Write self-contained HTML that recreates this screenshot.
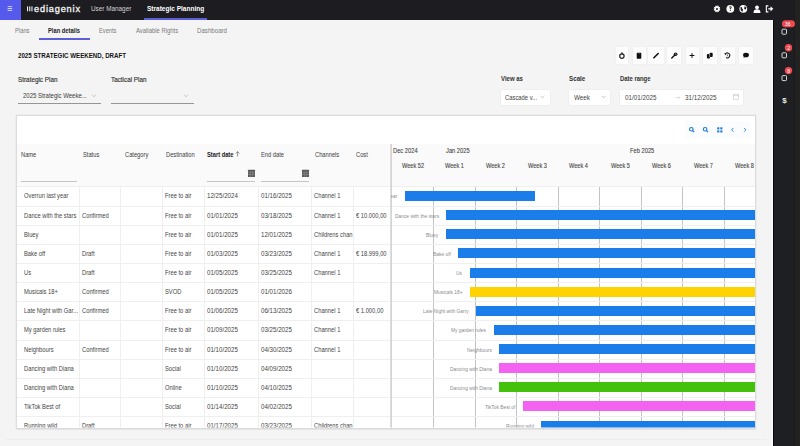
<!DOCTYPE html>
<html><head><meta charset="utf-8">
<style>
*{box-sizing:border-box;margin:0;padding:0}
html,body{width:800px;height:446px;overflow:hidden;background:#f4f4f4;font-family:"Liberation Sans",sans-serif;position:relative}
.a{position:absolute}
.t{position:absolute;white-space:nowrap;line-height:10px;height:10px;transform-origin:0 50%}
#top{position:absolute;left:0;top:0;width:800px;height:20px;background:#1c1c21}
#ham{position:absolute;left:0;top:0;width:21px;height:20px;background:#5559ec}
#side{position:absolute;left:773px;top:20px;width:27px;height:426px;background:#1e1f23;border-left:1.5px solid #08080a}
#card{position:absolute;left:17.3px;top:116.4px;width:737.7px;height:311.2px;background:#fff;box-shadow:0 0 0 1.3px #dcdcdc,0 1px 1px rgba(0,0,0,.3)}
.hdrbg{position:absolute;left:17px;top:143.5px;width:738px;height:43px;background:#fafafa}
.rl{position:absolute;left:17px;width:738px;height:1px;background:#efefef}
.vl{position:absolute;top:186.5px;height:241px;width:1px;background:#efefef}
.wl{position:absolute;top:186.5px;height:241px;width:1px;background:#c4c4c4}
.bar{position:absolute;height:10px}
.btn{position:absolute;top:47px;height:17px;background:#fcfcfc;box-shadow:0 0 1px rgba(0,0,0,.07)}
.sel{position:absolute;top:90px;height:15px;background:#fff;box-shadow:0 0 1.5px rgba(0,0,0,.13);border-radius:1px}
svg{position:absolute;overflow:visible}
</style></head><body>
<div id="top"></div>
<div id="ham"></div>
<svg style="left:0;top:0" width="21" height="20"><g fill="#ccd0fa"><rect x="7.6" y="6.1" width="4.6" height="1"/><rect x="7.6" y="8" width="4.6" height="1"/><rect x="7.6" y="9.9" width="4.6" height="1"/></g></svg>
<svg style="left:0;top:0" width="40" height="20"><g fill="#f4f4f4"><rect x="27" y="6.4" width="1.1" height="4.9"/><rect x="29.2" y="6.4" width="1.1" height="4.9"/><rect x="31.4" y="6.4" width="1.1" height="4.9"/></g></svg>
<div class="t" style="left:34.3px;top:3.6px;font-size:8.2px;font-weight:400;color:#f4f4f4;-webkit-text-stroke:.3px #f4f4f4;letter-spacing:.75px;transform:scaleX(1.12);height:12px;line-height:12px;transform-origin:0 50%">ediagenix</div>
<div class="a" style="left:143.5px;top:18px;width:63.5px;height:1.8px;background:#5d5fd8"></div>
<!-- top right icons -->
<svg style="left:0;top:0" width="800" height="20">
 <g fill="#fff">
  <path d="M719.35 8.98 L720.29 9.54 L719.78 10.77 L718.72 10.51 L718.61 10.62 L718.87 11.68 L717.64 12.19 L717.08 11.25 L716.92 11.25 L716.36 12.19 L715.13 11.68 L715.39 10.62 L715.28 10.51 L714.22 10.77 L713.71 9.54 L714.65 8.98 L714.65 8.82 L713.71 8.26 L714.22 7.03 L715.28 7.29 L715.39 7.18 L715.13 6.12 L716.36 5.61 L716.92 6.55 L717.08 6.55 L717.64 5.61 L718.87 6.12 L718.61 7.18 L718.72 7.29 L719.78 7.03 L720.29 8.26 L719.35 8.82Z M718.00 8.9 A1 1 0 1 0 716.00 8.9 A1 1 0 1 0 718.00 8.9Z" fill-rule="evenodd"/>
  <circle cx="730.3" cy="8.8" r="3.9"/>
  <circle cx="743.3" cy="8.8" r="3.9"/>
  <circle cx="757" cy="7.3" r="1.9"/>
  <path d="M753.6 12.3 q0-3 3.4-3 q3.4 0 3.4 3 v.8 h-6.8z"/>
  <path d="M765.8 5.3 h2.6 v1.1 h-1.5 v4.9 h1.5 v1.1 h-2.6z M768.2 8.2 h2.3 v-2 l2.8 2.6 -2.8 2.6 v-2 h-2.3z"/>
 </g>
 <g fill="#1c1c21">
  <path d="M729.2 7.6 q0-1.3 1.2-1.3 q1.2 0 1.2 1.1 q0 .8-.8 1.1 v.7 h-.9 v-1.2 q.8-.3.8-.7 q0-.4-.4-.4 q-.4 0-.4.6z"/><rect x="729.9" y="10" width=".9" height=".9"/>
  <path d="M740.5 7 q1.2-.3 1.6.6 q-.3 1 .4 1.4 q.8.3.4 1.3 q-.5.8-.2 1.6 q-1.6-.6-2.1-2.2 z M744.8 5.5 q-.2 1 .8 1.3 q.9.2.9 1.2 q-.8.3-.5 1.3 q-.4.4-1 0 q-.6-.8-.9 0 z"/>
 </g>
</svg>
<div id="side"></div>
<div class="a" style="left:793.5px;top:0px;width:1.5px;height:446px;background:#17191f"></div><div class="a" style="left:795px;top:0px;width:5px;height:446px;background:#222221"></div>
<div class="a" style="left:771.8px;top:20px;width:1.2px;height:426px;background:#fbfbfb"></div>
<div class="a" style="left:38.7px;top:38.1px;width:51.2px;height:1.7px;background:#5d5fd4"></div>
<div class="a" style="left:17.5px;top:103.1px;width:83px;height:1.3px;background:#969696"></div>
<div class="a" style="left:110.75px;top:103.1px;width:83px;height:1.3px;background:#969696"></div>

<div class="btn" style="left:616px;width:12px"></div>
<div class="btn" style="left:632.5px;width:13px"></div>
<div class="btn" style="left:648px;width:15.5px"></div>
<div class="btn" style="left:667px;width:13.5px"></div>
<div class="btn" style="left:685.5px;width:13px"></div>
<div class="btn" style="left:703px;width:13.5px"></div>
<div class="btn" style="left:721px;width:13.5px"></div>
<div class="btn" style="left:739px;width:14px"></div>
<svg style="left:0;top:0" width="800" height="70">
 <g fill="#111" stroke="none">
  <circle cx="621.9" cy="56.1" r="2.2" fill="none" stroke="#222" stroke-width="1.2"/>
  <path d="M621.2 52.6 l1.1-.3 .5 1.6 -1 .3z"/>
  <path d="M636.7 53.5 q0-.8.8-.8 h3 q.8 0 .8.8 v4.6 q0 .7-.7.7 h-3.2 q-.7 0-.7-.7z"/>
  <rect x="638.6" y="53.2" width=".9" height=".9" fill="#777"/>
  <path d="M653.9 57.8 L658.2 53.5" stroke="#111" stroke-width="1.6" stroke-linecap="round"/>
  <path d="M671.8 58.1 L674.6 55.3" stroke="#111" stroke-width="1.4" stroke-linecap="round"/>
  <circle cx="675.6" cy="54.2" r="1.8"/>
  <circle cx="675.8" cy="54" r=".55" fill="#fcfcfc"/>
  <path d="M691.55 53.1 h.9 v1.95 h1.95 v.9 h-1.95 v1.95 h-.9 v-1.95 h-1.95 v-.9 h1.95z"/>
  <rect x="706.9" y="54.1" width="3.1" height="4.4" rx="1"/>
  <rect x="709.6" y="52.7" width="3.1" height="4.4" rx="1"/><path d="M709.6 54.1 v3" stroke="#fcfcfc" stroke-width=".5"/>
  <path d="M725.3 54.2 A2.4 2.4 0 1 1 726.1 57.5" fill="none" stroke="#222" stroke-width="1.1"/>
  <path d="M724.3 53.3 l2 .2 -1.1 1.8z"/>
  <path d="M727.3 54.5 v1.2 l.8.5" fill="none" stroke="#222" stroke-width=".7"/>
  <ellipse cx="746" cy="55" rx="2.95" ry="2.3"/>
  <path d="M744 56 l-.4 1.9 2-1.3z"/>
 </g>
</svg>
<div class="sel" style="left:501px;width:48.5px"></div>
<div class="sel" style="left:569px;width:41px"></div>
<div class="sel" style="left:620.3px;width:123px"></div>
<svg style="left:0;top:0" width="800" height="110">
 <g fill="none" stroke="#a8a8a8" stroke-width=".65"><path d="M91.9 94.9 l1.9 1.8 1.9-1.8"/><path d="M184.1 94.9 l1.9 1.8 1.9-1.8"/>
 <path d="M540.6 96 l1.9 1.8 1.9-1.8"/><path d="M601.9 96 l1.9 1.8 1.9-1.8"/></g>
</svg>
<svg style="left:0;top:0" width="800" height="110"><path d="M675.2 97.6 h4.4 M678.4 96.7 l1.2 .9 -1.2 .9" fill="none" stroke="#c4c4c4" stroke-width=".55"/></svg>
<svg style="left:0;top:0" width="800" height="110"><rect x="733.4" y="94.2" width="5" height="5" fill="none" stroke="#c4c4c4" stroke-width=".6"/><path d="M733.4 95.6 h5" stroke="#c4c4c4" stroke-width=".6"/></svg>

<div class="t" style="left:90.50px;top:3.60px;font-size:7.2px;color:#d4d4d4;transform:scaleX(0.885);">User Manager</div>
<div class="t" style="left:146.50px;top:3.60px;font-size:7.4px;font-weight:700;color:#ffffff;transform:scaleX(0.881);">Strategic Planning</div>
<div class="t" style="left:14.50px;top:26.20px;font-size:6.6px;color:#7a7a7a;transform:scaleX(0.879);">Plans</div>
<div class="t" style="left:48.00px;top:26.20px;font-size:6.6px;font-weight:700;color:#1e1e1e;transform:scaleX(0.873);">Plan details</div>
<div class="t" style="left:99.40px;top:26.20px;font-size:6.6px;color:#7a7a7a;transform:scaleX(0.863);">Events</div>
<div class="t" style="left:136.00px;top:26.20px;font-size:6.6px;color:#7a7a7a;transform:scaleX(0.895);">Available Rights</div>
<div class="t" style="left:197.00px;top:26.20px;font-size:6.6px;color:#7a7a7a;transform:scaleX(0.930);">Dashboard</div>
<div class="t" style="left:17.50px;top:51.20px;font-size:7.0px;font-weight:700;color:#141414;transform:scaleX(0.880);">2025 STRATEGIC WEEKEND, DRAFT</div>
<div class="t" style="left:17.50px;top:74.60px;font-size:7.0px;color:#303030;transform:scaleX(0.906);-webkit-text-stroke:.15px #303030;">Strategic Plan</div>
<div class="t" style="left:110.75px;top:74.60px;font-size:7.0px;color:#303030;transform:scaleX(0.903);-webkit-text-stroke:.15px #303030;">Tactical Plan</div>
<div class="t" style="left:22.50px;top:90.60px;font-size:6.8px;color:#3c3c3c;transform:scaleX(0.880);">2025 Strategic Weeke...</div>
<div class="t" style="left:500.50px;top:73.80px;font-size:6.8px;font-weight:700;color:#333;transform:scaleX(0.882);">View as</div>
<div class="t" style="left:569.00px;top:73.80px;font-size:6.8px;font-weight:700;color:#333;transform:scaleX(0.918);">Scale</div>
<div class="t" style="left:619.80px;top:73.80px;font-size:6.8px;font-weight:700;color:#333;transform:scaleX(0.868);">Date range</div>
<div class="t" style="left:505.00px;top:92.60px;font-size:6.6px;color:#444;transform:scaleX(0.885);">Cascade v...</div>
<div class="t" style="left:573.50px;top:92.60px;font-size:6.6px;color:#444;transform:scaleX(0.955);">Week</div>
<div class="t" style="left:624.60px;top:92.60px;font-size:6.8px;color:#444;transform:scaleX(0.923);">01/01/2025</div>
<div class="t" style="left:684.70px;top:92.60px;font-size:6.8px;color:#444;transform:scaleX(0.923);">31/12/2025</div>
<div class="a" style="left:6px;top:439px;width:761px;height:1px;background:#ededed"></div>
<div id="card"></div>
<div style="position:absolute;left:0;top:0;width:800px;height:446px;clip-path:inset(116px 45px 18.4px 17px)">
<div class="hdrbg"></div>
<div class="a" style="left:685px;top:120.5px;width:66px;height:18px;background:#fafcfe;border-radius:4px"></div>
<div class="vl" style="left:79.00px"></div>
<div class="vl" style="left:120.40px"></div>
<div class="vl" style="left:162.00px"></div>
<div class="vl" style="left:204.00px"></div>
<div class="vl" style="left:258.00px"></div>
<div class="vl" style="left:311.00px"></div>
<div class="vl" style="left:353.00px"></div>
<div class="wl" style="left:433px"></div>
<div class="wl" style="left:475px"></div>
<div class="wl" style="left:516px"></div>
<div class="wl" style="left:558px"></div>
<div class="wl" style="left:599px"></div>
<div class="wl" style="left:641px"></div>
<div class="wl" style="left:682px"></div>
<div class="wl" style="left:724px"></div>
<div class="rl" style="top:186px"></div>
<div class="bar" style="left:404.61px;top:191px;width:130.43px;background:#1a7de9"></div>
<div class="rl" style="top:206px"></div>
<div class="bar" style="left:446.11px;top:210px;width:313.89px;background:#1a7de9"></div>
<div class="rl" style="top:225px"></div>
<div class="bar" style="left:446.11px;top:229px;width:313.89px;background:#1a7de9"></div>
<div class="rl" style="top:244px"></div>
<div class="bar" style="left:457.96px;top:248px;width:302.04px;background:#1a7de9"></div>
<div class="rl" style="top:263px"></div>
<div class="bar" style="left:469.82px;top:268px;width:290.18px;background:#1a7de9"></div>
<div class="rl" style="top:282px"></div>
<div class="bar" style="left:469.82px;top:287px;width:290.18px;background:#ffd300"></div>
<div class="rl" style="top:301px"></div>
<div class="bar" style="left:475.75px;top:306px;width:284.25px;background:#1a7de9"></div>
<div class="rl" style="top:320px"></div>
<div class="bar" style="left:493.54px;top:325px;width:266.46px;background:#1a7de9"></div>
<div class="rl" style="top:340px"></div>
<div class="bar" style="left:499.46px;top:344px;width:260.54px;background:#1a7de9"></div>
<div class="rl" style="top:359px"></div>
<div class="bar" style="left:499.46px;top:363px;width:260.54px;background:#f462f2"></div>
<div class="rl" style="top:378px"></div>
<div class="bar" style="left:499.46px;top:382px;width:260.54px;background:#44c10b"></div>
<div class="rl" style="top:397px"></div>
<div class="bar" style="left:523.18px;top:401px;width:236.82px;background:#f462f2"></div>
<div class="rl" style="top:416px"></div>
<div class="bar" style="left:540.96px;top:421px;width:219.04px;background:#1a7de9"></div>
<div class="a" style="left:390px;top:143.5px;width:2px;height:284px;background:#dedede;border-right:1px solid #d4d4d4"></div>
<div class="a" style="left:20.5px;top:180.5px;width:56px;height:1px;background:#c6c6c6"></div>
<div class="a" style="left:207px;top:180.5px;width:47.5px;height:1px;background:#c6c6c6"></div>
<div class="a" style="left:261px;top:180.5px;width:47.75px;height:1px;background:#c6c6c6"></div>
<svg style="left:0;top:0" width="800" height="446">
 <g fill="#5a5a5a"><rect x="248" y="169.8" width="7" height="7.2" rx=".5"/><rect x="302" y="169.8" width="7" height="7.2" rx=".5"/></g>
 <g stroke="#a0a0a0" stroke-width=".45" fill="none"><path d="M248 172.2 h7 M248 174.4 h7 M250.3 171.5 v5.5 M252.6 171.5 v5.5"/><path d="M302 172.2 h7 M302 174.4 h7 M304.3 171.5 v5.5 M306.6 171.5 v5.5"/></g>
 <path d="M237.6 151.6 v4.8 M235.8 153.4 l1.8-1.8 1.8 1.8" fill="none" stroke="#666" stroke-width=".7"/>
 <g fill="none" stroke="#1f7ad8" stroke-width="1.15">
  <circle cx="691.3" cy="129.2" r="1.75"/><path d="M692.6 130.5 l1.6 1.6"/>
  <circle cx="705.1" cy="129.2" r="1.75"/><path d="M706.4 130.5 l1.6 1.6"/>
 </g>
 <g fill="#1f7ad8"><rect x="717.2" y="127.3" width="2.1" height="2.1"/><rect x="720.3" y="127.3" width="2.1" height="2.1"/><rect x="717.2" y="130.4" width="2.1" height="2.1"/><rect x="720.3" y="130.4" width="2.1" height="2.1"/></g>
 <g fill="none" stroke="#1f7ad8" stroke-width=".9"><path d="M733.3 128 l-1.6 1.8 1.6 1.8"/><path d="M744.2 128 l1.6 1.8 -1.6 1.8"/></g>
</svg>
<div class="t" style="left:20.50px;top:149.50px;font-size:6.6px;color:#3c3c3c;transform:scaleX(0.870);">Name</div>
<div class="t" style="left:82.90px;top:149.50px;font-size:6.6px;color:#3c3c3c;transform:scaleX(0.870);">Status</div>
<div class="t" style="left:124.60px;top:149.50px;font-size:6.6px;color:#3c3c3c;transform:scaleX(0.870);">Category</div>
<div class="t" style="left:165.70px;top:149.50px;font-size:6.6px;color:#3c3c3c;transform:scaleX(0.870);">Destination</div>
<div class="t" style="left:207.00px;top:149.50px;font-size:6.6px;font-weight:700;color:#1a1a1a;transform:scaleX(0.870);">Start date</div>
<div class="t" style="left:261.25px;top:149.50px;font-size:6.6px;color:#3c3c3c;transform:scaleX(0.870);">End date</div>
<div class="t" style="left:315.00px;top:149.50px;font-size:6.6px;color:#3c3c3c;transform:scaleX(0.870);">Channels</div>
<div class="t" style="left:356.25px;top:149.50px;font-size:6.6px;color:#3c3c3c;transform:scaleX(0.870);">Cost</div>
<div class="t" style="left:392.50px;top:145.50px;font-size:6.4px;color:#3d3d3d;transform:scaleX(0.900);-webkit-text-stroke:.08px #3d3d3d;">Dec 2024</div>
<div class="t" style="left:446.25px;top:145.50px;font-size:6.4px;color:#3d3d3d;transform:scaleX(0.900);-webkit-text-stroke:.08px #3d3d3d;">Jan 2025</div>
<div class="t" style="left:629.50px;top:145.50px;font-size:6.4px;color:#3d3d3d;transform:scaleX(0.900);-webkit-text-stroke:.08px #3d3d3d;">Feb 2025</div>
<div class="t" style="left:401.69px;top:160.60px;font-size:6.6px;color:#474747;transform:scaleX(0.850);-webkit-text-stroke:.12px #474747;">Week 52</div>
<div class="t" style="left:444.74px;top:160.60px;font-size:6.6px;color:#474747;transform:scaleX(0.850);-webkit-text-stroke:.12px #474747;">Week 1</div>
<div class="t" style="left:486.24px;top:160.60px;font-size:6.6px;color:#474747;transform:scaleX(0.850);-webkit-text-stroke:.12px #474747;">Week 2</div>
<div class="t" style="left:527.74px;top:160.60px;font-size:6.6px;color:#474747;transform:scaleX(0.850);-webkit-text-stroke:.12px #474747;">Week 3</div>
<div class="t" style="left:569.24px;top:160.60px;font-size:6.6px;color:#474747;transform:scaleX(0.850);-webkit-text-stroke:.12px #474747;">Week 4</div>
<div class="t" style="left:610.74px;top:160.60px;font-size:6.6px;color:#474747;transform:scaleX(0.850);-webkit-text-stroke:.12px #474747;">Week 5</div>
<div class="t" style="left:652.24px;top:160.60px;font-size:6.6px;color:#474747;transform:scaleX(0.850);-webkit-text-stroke:.12px #474747;">Week 6</div>
<div class="t" style="left:693.74px;top:160.60px;font-size:6.6px;color:#474747;transform:scaleX(0.850);-webkit-text-stroke:.12px #474747;">Week 7</div>
<div class="t" style="left:735.24px;top:160.60px;font-size:6.6px;color:#474747;transform:scaleX(0.850);-webkit-text-stroke:.12px #474747;">Week 8</div>
<div class="t" style="left:23.60px;top:191.47px;font-size:6.5px;color:#444;transform:scaleX(0.890);">Overrun last year</div>
<div class="t" style="left:165.30px;top:191.47px;font-size:6.5px;color:#444;transform:scaleX(0.890);">Free to air</div>
<div class="t" style="left:207.30px;top:191.47px;font-size:6.5px;color:#444;transform:scaleX(0.950);">12/25/2024</div>
<div class="t" style="left:261.30px;top:191.47px;font-size:6.5px;color:#444;transform:scaleX(0.950);">01/16/2025</div>
<div class="t" style="left:314.30px;top:191.47px;font-size:6.5px;color:#444;transform:scaleX(0.890);">Channel 1</div>
<div class="t" style="left:23.60px;top:210.59px;font-size:6.5px;color:#444;transform:scaleX(0.890);">Dance with the stars</div>
<div class="t" style="left:82.30px;top:210.59px;font-size:6.5px;color:#444;transform:scaleX(0.890);">Confirmed</div>
<div class="t" style="left:165.30px;top:210.59px;font-size:6.5px;color:#444;transform:scaleX(0.890);">Free to air</div>
<div class="t" style="left:207.30px;top:210.59px;font-size:6.5px;color:#444;transform:scaleX(0.950);">01/01/2025</div>
<div class="t" style="left:261.30px;top:210.59px;font-size:6.5px;color:#444;transform:scaleX(0.950);">03/18/2025</div>
<div class="t" style="left:314.30px;top:210.59px;font-size:6.5px;color:#444;transform:scaleX(0.890);">Channel 1</div>
<div class="t" style="left:356.30px;top:210.59px;font-size:6.5px;color:#444;transform:scaleX(0.890);">€ 10.000,00</div>
<div class="t" style="left:23.60px;top:229.72px;font-size:6.5px;color:#444;transform:scaleX(0.890);">Bluey</div>
<div class="t" style="left:165.30px;top:229.72px;font-size:6.5px;color:#444;transform:scaleX(0.890);">Free to air</div>
<div class="t" style="left:207.30px;top:229.72px;font-size:6.5px;color:#444;transform:scaleX(0.950);">01/01/2025</div>
<div class="t" style="left:261.30px;top:229.72px;font-size:6.5px;color:#444;transform:scaleX(0.950);">12/01/2025</div>
<div class="t" style="left:314.30px;top:229.72px;font-size:6.5px;color:#444;transform:scaleX(0.890);">Childrens chan</div>
<div class="t" style="left:23.60px;top:248.86px;font-size:6.5px;color:#444;transform:scaleX(0.890);">Bake off</div>
<div class="t" style="left:82.30px;top:248.86px;font-size:6.5px;color:#444;transform:scaleX(0.890);">Draft</div>
<div class="t" style="left:165.30px;top:248.86px;font-size:6.5px;color:#444;transform:scaleX(0.890);">Free to air</div>
<div class="t" style="left:207.30px;top:248.86px;font-size:6.5px;color:#444;transform:scaleX(0.950);">01/03/2025</div>
<div class="t" style="left:261.30px;top:248.86px;font-size:6.5px;color:#444;transform:scaleX(0.950);">03/23/2025</div>
<div class="t" style="left:314.30px;top:248.86px;font-size:6.5px;color:#444;transform:scaleX(0.890);">Channel 1</div>
<div class="t" style="left:356.30px;top:248.86px;font-size:6.5px;color:#444;transform:scaleX(0.890);">€ 18.999,00</div>
<div class="t" style="left:23.60px;top:267.99px;font-size:6.5px;color:#444;transform:scaleX(0.890);">Us</div>
<div class="t" style="left:82.30px;top:267.99px;font-size:6.5px;color:#444;transform:scaleX(0.890);">Draft</div>
<div class="t" style="left:165.30px;top:267.99px;font-size:6.5px;color:#444;transform:scaleX(0.890);">Free to air</div>
<div class="t" style="left:207.30px;top:267.99px;font-size:6.5px;color:#444;transform:scaleX(0.950);">01/05/2025</div>
<div class="t" style="left:261.30px;top:267.99px;font-size:6.5px;color:#444;transform:scaleX(0.950);">03/25/2025</div>
<div class="t" style="left:314.30px;top:267.99px;font-size:6.5px;color:#444;transform:scaleX(0.890);">Channel 1</div>
<div class="t" style="left:23.60px;top:287.12px;font-size:6.5px;color:#444;transform:scaleX(0.890);">Musicals 18+</div>
<div class="t" style="left:82.30px;top:287.12px;font-size:6.5px;color:#444;transform:scaleX(0.890);">Confirmed</div>
<div class="t" style="left:165.30px;top:287.12px;font-size:6.5px;color:#444;transform:scaleX(0.890);">SVOD</div>
<div class="t" style="left:207.30px;top:287.12px;font-size:6.5px;color:#444;transform:scaleX(0.950);">01/05/2025</div>
<div class="t" style="left:261.30px;top:287.12px;font-size:6.5px;color:#444;transform:scaleX(0.950);">01/01/2026</div>
<div class="t" style="left:23.60px;top:306.25px;font-size:6.5px;color:#444;transform:scaleX(0.890);">Late Night with Gar...</div>
<div class="t" style="left:82.30px;top:306.25px;font-size:6.5px;color:#444;transform:scaleX(0.890);">Confirmed</div>
<div class="t" style="left:165.30px;top:306.25px;font-size:6.5px;color:#444;transform:scaleX(0.890);">Free to air</div>
<div class="t" style="left:207.30px;top:306.25px;font-size:6.5px;color:#444;transform:scaleX(0.950);">01/06/2025</div>
<div class="t" style="left:261.30px;top:306.25px;font-size:6.5px;color:#444;transform:scaleX(0.950);">06/13/2025</div>
<div class="t" style="left:314.30px;top:306.25px;font-size:6.5px;color:#444;transform:scaleX(0.890);">Channel 1</div>
<div class="t" style="left:356.30px;top:306.25px;font-size:6.5px;color:#444;transform:scaleX(0.890);">€ 1.000,00</div>
<div class="t" style="left:23.60px;top:325.38px;font-size:6.5px;color:#444;transform:scaleX(0.890);">My garden rules</div>
<div class="t" style="left:165.30px;top:325.38px;font-size:6.5px;color:#444;transform:scaleX(0.890);">Free to air</div>
<div class="t" style="left:207.30px;top:325.38px;font-size:6.5px;color:#444;transform:scaleX(0.950);">01/09/2025</div>
<div class="t" style="left:261.30px;top:325.38px;font-size:6.5px;color:#444;transform:scaleX(0.950);">03/25/2025</div>
<div class="t" style="left:314.30px;top:325.38px;font-size:6.5px;color:#444;transform:scaleX(0.890);">Channel 1</div>
<div class="t" style="left:23.60px;top:344.50px;font-size:6.5px;color:#444;transform:scaleX(0.890);">Neighbours</div>
<div class="t" style="left:82.30px;top:344.50px;font-size:6.5px;color:#444;transform:scaleX(0.890);">Confirmed</div>
<div class="t" style="left:165.30px;top:344.50px;font-size:6.5px;color:#444;transform:scaleX(0.890);">Free to air</div>
<div class="t" style="left:207.30px;top:344.50px;font-size:6.5px;color:#444;transform:scaleX(0.950);">01/10/2025</div>
<div class="t" style="left:261.30px;top:344.50px;font-size:6.5px;color:#444;transform:scaleX(0.950);">04/30/2025</div>
<div class="t" style="left:314.30px;top:344.50px;font-size:6.5px;color:#444;transform:scaleX(0.890);">Channel 1</div>
<div class="t" style="left:23.60px;top:363.63px;font-size:6.5px;color:#444;transform:scaleX(0.890);">Dancing with Diana</div>
<div class="t" style="left:165.30px;top:363.63px;font-size:6.5px;color:#444;transform:scaleX(0.890);">Social</div>
<div class="t" style="left:207.30px;top:363.63px;font-size:6.5px;color:#444;transform:scaleX(0.950);">01/10/2025</div>
<div class="t" style="left:261.30px;top:363.63px;font-size:6.5px;color:#444;transform:scaleX(0.950);">04/09/2025</div>
<div class="t" style="left:23.60px;top:382.76px;font-size:6.5px;color:#444;transform:scaleX(0.890);">Dancing with Diana</div>
<div class="t" style="left:165.30px;top:382.76px;font-size:6.5px;color:#444;transform:scaleX(0.890);">Online</div>
<div class="t" style="left:207.30px;top:382.76px;font-size:6.5px;color:#444;transform:scaleX(0.950);">01/10/2025</div>
<div class="t" style="left:261.30px;top:382.76px;font-size:6.5px;color:#444;transform:scaleX(0.950);">04/10/2025</div>
<div class="t" style="left:23.60px;top:401.89px;font-size:6.5px;color:#444;transform:scaleX(0.890);">TikTok Best of</div>
<div class="t" style="left:165.30px;top:401.89px;font-size:6.5px;color:#444;transform:scaleX(0.890);">Social</div>
<div class="t" style="left:207.30px;top:401.89px;font-size:6.5px;color:#444;transform:scaleX(0.950);">01/14/2025</div>
<div class="t" style="left:261.30px;top:401.89px;font-size:6.5px;color:#444;transform:scaleX(0.950);">04/02/2025</div>
<div class="t" style="left:23.60px;top:421.02px;font-size:6.5px;color:#444;transform:scaleX(0.890);">Running wild</div>
<div class="t" style="left:82.30px;top:421.02px;font-size:6.5px;color:#444;transform:scaleX(0.890);">Draft</div>
<div class="t" style="left:165.30px;top:421.02px;font-size:6.5px;color:#444;transform:scaleX(0.890);">Free to air</div>
<div class="t" style="left:207.30px;top:421.02px;font-size:6.5px;color:#444;transform:scaleX(0.950);">01/17/2025</div>
<div class="t" style="left:261.30px;top:421.02px;font-size:6.5px;color:#444;transform:scaleX(0.950);">03/23/2025</div>
<div class="t" style="left:314.30px;top:421.02px;font-size:6.5px;color:#444;transform:scaleX(0.890);">Childrens chan</div>
</div>
<div style="position:absolute;left:0;top:0;width:800px;height:446px;clip-path:inset(116px 45px 18.4px 391px)">
<div class="t" style="left:359.78px;top:191.47px;font-size:5.6px;color:#8c8c8c;transform:scaleX(0.870);/*G*/">Overrun last year</div>
<div class="t" style="left:394.51px;top:210.59px;font-size:5.6px;color:#8c8c8c;transform:scaleX(0.870);/*G*/">Dance with the stars</div>
<div class="t" style="left:426.43px;top:229.72px;font-size:5.6px;color:#8c8c8c;transform:scaleX(0.870);/*G*/">Bluey</div>
<div class="t" style="left:432.68px;top:248.86px;font-size:5.6px;color:#8c8c8c;transform:scaleX(0.870);/*G*/">Bake off</div>
<div class="t" style="left:456.37px;top:267.99px;font-size:5.6px;color:#8c8c8c;transform:scaleX(0.870);/*G*/">Us</div>
<div class="t" style="left:433.77px;top:287.12px;font-size:5.6px;color:#8c8c8c;transform:scaleX(0.870);/*G*/">Musicals 18+</div>
<div class="t" style="left:422.53px;top:306.25px;font-size:5.6px;color:#8c8c8c;transform:scaleX(0.870);/*G*/">Late Night with Garry</div>
<div class="t" style="left:451.14px;top:325.38px;font-size:5.6px;color:#8c8c8c;transform:scaleX(0.870);/*G*/">My garden rules</div>
<div class="t" style="left:467.07px;top:344.50px;font-size:5.6px;color:#8c8c8c;transform:scaleX(0.870);/*G*/">Neighbours</div>
<div class="t" style="left:450.03px;top:363.63px;font-size:5.6px;color:#8c8c8c;transform:scaleX(0.870);/*G*/">Dancing with Diana</div>
<div class="t" style="left:450.03px;top:382.76px;font-size:5.6px;color:#8c8c8c;transform:scaleX(0.870);/*G*/">Dancing with Diana</div>
<div class="t" style="left:485.30px;top:401.89px;font-size:5.6px;color:#8c8c8c;transform:scaleX(0.870);/*G*/">TikTok Best of</div>
<div class="t" style="left:505.60px;top:421.02px;font-size:5.6px;color:#8c8c8c;transform:scaleX(0.870);/*G*/">Running wild</div>
</div>
<!-- right sidebar icons -->
<svg style="left:0;top:0" width="800" height="446">
 <g fill="#f0484f"><rect x="781.9" y="20.2" width="13.1" height="7" rx="3.5"/><circle cx="788.5" cy="47.8" r="3.7"/><circle cx="788.5" cy="70.6" r="3.7"/></g>
 <g fill="none" stroke="#d8d8d8" stroke-width="1"><rect x="782" y="29.2" width="4.5" height="5" rx=".8"/><rect x="782" y="52.8" width="4.5" height="5" rx=".8"/><rect x="782" y="75.6" width="4.5" height="5" rx=".8"/></g>
</svg>
<div class="t" style="left:785px;top:18.8px;font-size:5px;color:#fff;line-height:10px">36</div>
<div class="t" style="left:787.2px;top:42.8px;font-size:5px;color:#fff;line-height:10px">2</div>
<div class="t" style="left:787.2px;top:65.6px;font-size:5px;color:#fff;line-height:10px">8</div>
<div class="t" style="left:782.2px;top:96.2px;font-size:8px;font-weight:700;color:#e8e8e8;line-height:10px">$</div>
</body></html>
